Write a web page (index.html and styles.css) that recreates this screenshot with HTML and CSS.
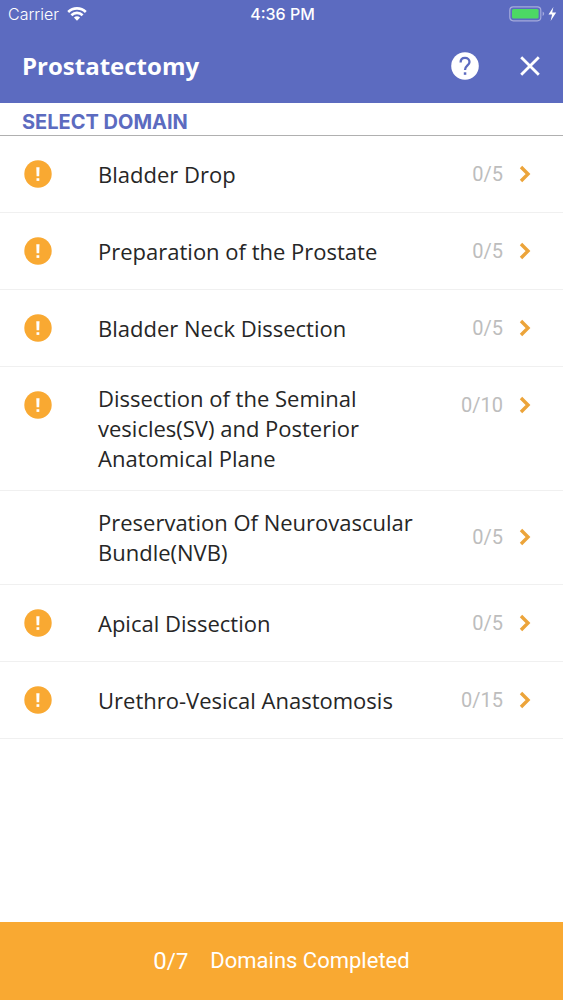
FILE: index.html
```html
<!DOCTYPE html>
<html lang="en">
<head>
    <meta charset="UTF-8">
    <meta name="viewport" content="width=device-width, initial-scale=1">
    <title>Prostatectomy</title>
    <link rel="stylesheet" href="styles.css">
</head>
<body>
    <svg class="sprite" aria-hidden="true">
        <symbol id="alert" viewBox="0 0 28 28">
            <circle cx="14" cy="14" r="13.7" fill="#f9a932"/>
            <path d="M12.3 7.2h3.2l-.3 9h-2.6z" fill="#fff"/>
            <path d="M12.5 18.2h2.8v2.7h-2.8z" fill="#fff"/>
        </symbol>
        <symbol id="chevron" viewBox="0 0 12 18">
            <path d="M2 2l7 7-7 7" fill="none" stroke="#eca43a" stroke-width="3.4"/>
        </symbol>
    </svg>

    <header class="header">
        <div class="status">
            <div class="carrier">
                <span>Carrier</span>
                <svg width="20" height="14" viewBox="0 0 20 14">
                    <g fill="none" stroke="#fff" stroke-width="2.6">
                        <path d="M1.2 5a12.6 12.6 0 0 1 17.6 0"/>
                        <path d="M4.4 8.2a8 8 0 0 1 11.2 0"/>
                    </g>
                    <path d="M6.9 10.6a4.5 4.5 0 0 1 6.2 0L10 13.8z" fill="#fff"/>
                </svg>
            </div>
            <time class="clock">4:36 PM</time>
            <div class="battery">
                <svg width="48" height="16" viewBox="0 0 48 16">
                    <rect x=".8" y=".8" width="31" height="14" rx="3.5" fill="none" stroke="#a5abdc" stroke-width="1.2"/>
                    <rect x="3" y="3" width="26.6" height="9.6" rx="1.5" fill="#4cd964"/>
                    <path d="M33.6 5.6q1.6.8 1.6 2.2t-1.6 2.2z" fill="#a5abdc"/>
                    <path d="M44.4 1L39.5 8.6h3.6L41.6 15l5.6-8.4h-4z" fill="#fff"/>
                </svg>
            </div>
        </div>
        <div class="bar">
            <h1 class="title">Prostatectomy</h1>
            <button class="icon-btn" type="button" aria-label="Help">
                <svg width="28" height="28" viewBox="0 0 28 28">
                    <circle cx="14" cy="14" r="13.8" fill="#fff"/>
                    <path d="M9.6 10.4C9.6 7.7 11.4 5.900 14 5.900s4.500 1.700 4.500 4.100c0 3.300-4.500 3.700-4.500 7.900" fill="none" stroke="#5c6bc0" stroke-width="2.3"/>
                    <path d="M12.8 20.3h2.5v2.5h-2.5z" fill="#5c6bc0"/>
                </svg>
            </button>
            <button class="icon-btn" type="button" aria-label="Close">
                <svg width="20" height="20" viewBox="0 0 20 20">
                    <path d="M1.2 1.2l17.6 17.6M18.8 1.2L1.2 18.8" stroke="#fff" stroke-width="2.8"/>
                </svg>
            </button>
        </div>
    </header>

    <main class="content">
        <h2 class="section">SELECT DOMAIN</h2>
        <ul class="list">
            <li>
                <a class="row" href="#">
                    <span class="mark"><svg width="28" height="28"><use href="#alert"/></svg></span>
                    <span class="name">Bladder Drop</span>
                    <span class="score">0/5 <svg width="12" height="18"><use href="#chevron"/></svg></span>
                </a>
            </li>
            <li>
                <a class="row" href="#">
                    <span class="mark"><svg width="28" height="28"><use href="#alert"/></svg></span>
                    <span class="name">Preparation of the Prostate</span>
                    <span class="score">0/5 <svg width="12" height="18"><use href="#chevron"/></svg></span>
                </a>
            </li>
            <li>
                <a class="row" href="#">
                    <span class="mark"><svg width="28" height="28"><use href="#alert"/></svg></span>
                    <span class="name">Bladder Neck Dissection</span>
                    <span class="score">0/5 <svg width="12" height="18"><use href="#chevron"/></svg></span>
                </a>
            </li>
            <li>
                <a class="row row-top" href="#">
                    <span class="mark"><svg width="28" height="28"><use href="#alert"/></svg></span>
                    <span class="name">Dissection of the Seminal vesicles(SV) and Posterior Anatomical Plane</span>
                    <span class="score">0/10 <svg width="12" height="18"><use href="#chevron"/></svg></span>
                </a>
            </li>
            <li>
                <a class="row" href="#">
                    <span class="mark"></span>
                    <span class="name">Preservation Of Neurovascular Bundle(NVB)</span>
                    <span class="score">0/5 <svg width="12" height="18"><use href="#chevron"/></svg></span>
                </a>
            </li>
            <li>
                <a class="row" href="#">
                    <span class="mark"><svg width="28" height="28"><use href="#alert"/></svg></span>
                    <span class="name">Apical Dissection</span>
                    <span class="score">0/5 <svg width="12" height="18"><use href="#chevron"/></svg></span>
                </a>
            </li>
            <li>
                <a class="row" href="#">
                    <span class="mark"><svg width="28" height="28"><use href="#alert"/></svg></span>
                    <span class="name">Urethro-Vesical Anastomosis</span>
                    <span class="score">0/15 <svg width="12" height="18"><use href="#chevron"/></svg></span>
                </a>
            </li>
        </ul>
    </main>

    <footer class="footer">
        <span class="total"><span class="done">0</span>/7</span>
        <span>Domains Completed</span>
    </footer>
</body>
</html>
```
FILE: styles.css
```css
* {box-sizing: border-box;}
html, body, h1, h2, ul {margin: 0; padding: 0;}
body {
    display: flex;
    flex-direction: column;
    min-height: 100vh;
    background: #fff;
    font-family: "Open Sans", "Noto Sans", sans-serif;
    color: #262626;
}
svg {display: block; flex: none;}
.sprite {position: absolute; width: 0; height: 0;}

/* header */
.header {background: #5c6bc0; color: #fff;}
.status {
    display: grid;
    grid-template-columns: 1fr auto 1fr;
    align-items: center;
    height: 28px;
    padding: 0 6px 0 8px;
    font: 16px/28px Inter, sans-serif;
}
.carrier {display: flex; align-items: center; gap: 8px; font-weight: 300;}
.clock {font-weight: 500;}
.battery {justify-self: end;}
.bar {
    display: flex;
    align-items: center;
    gap: 41px;
    height: 75px;
    padding: 0 23px 0 22px;
}
.title {flex: 1; font-size: 24px; line-height: 32px; font-weight: 700;}
.icon-btn {
    padding: 0;
    border: 0;
    background: none;
    cursor: pointer;
}

/* domains */
.content {flex: 1;}
.section {
    height: 33px;
    padding: 4px 22px 0;
    border-bottom: 1px solid #b0b0b0;
    font: 700 20px/30px Inter, sans-serif;
    color: #5c6bc0;
}
.list {list-style: none;}
.row {
    display: flex;
    align-items: center;
    min-height: 77px;
    padding: 16px 32px 17px 24px;
    border-bottom: 1px solid #f0f0f0;
    color: inherit;
    text-decoration: none;
}
.row-top {align-items: flex-start;}
.mark {
    display: flex;
    align-items: center;
    flex: none;
    width: 74px;
    height: 43px;
}
.name {flex: 1; padding-right: 32px; font-size: 22px; line-height: 30px;}
.score {
    display: flex;
    align-items: center;
    gap: 16px;
    height: 43px;
    font-family: Roboto, sans-serif;
    font-size: 20px;
    color: #bdbdbd;
}

/* footer */
.footer {
    display: flex;
    align-items: center;
    justify-content: center;
    gap: 22px;
    height: 78px;
    background: #f9a932;
    font: 22px/32px Roboto, sans-serif;
    color: #fff;
}
.done {font-size: 24px;}
```
